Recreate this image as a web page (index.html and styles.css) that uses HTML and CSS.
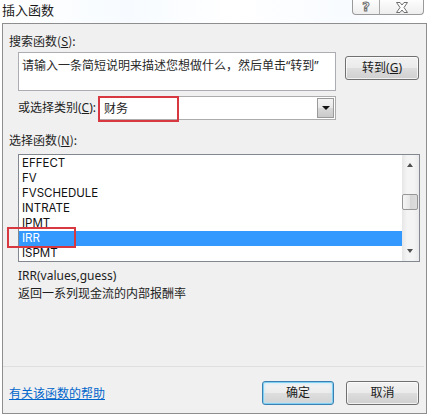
FILE: index.html
```html
<!DOCTYPE html>
<html lang="zh-CN">
<head>
<meta charset="utf-8">
<title>插入函数</title>
<link rel="stylesheet" href="styles.css">
</head>
<body>
<div class="window">
  <div class="titlebar">
    <span class="title">插入函数</span>
    <div class="caption-btns">
      <div class="cbtn help"><span class="qmark">?</span></div>
      <div class="cbtn close">
        <svg width="14" height="11" viewBox="0 0 14 11">
          <path d="M1.5 0.5 H5 L7 3 L9 0.5 H12.5 L9 5.5 L12.5 10.5 H9 L7 8 L5 10.5 H1.5 L5 5.5 Z" fill="#fdfdfd" stroke="#6f6f6f" stroke-width="1"/>
        </svg>
      </div>
    </div>
  </div>
  <div class="panel">
    <div class="label l1">搜索函数(<u>S</u>):</div>
    <div class="search-row">
      <div class="textbox">请输入一条简短说明来描述您想做什么，然后单击“转到”</div>
      <div class="btn go">转到(<u>G</u>)</div>
    </div>
    <div class="cat-row">
      <span class="cat-label">或选择类别(<u>C</u>):</span>
      <div class="select">
        <span class="sel-text">财务</span>
        <div class="dd-btn"><span class="dd-arrow"></span></div>
        <div class="mark sel-mark"></div>
      </div>
    </div>
    <div class="label l2">选择函数(<u>N</u>):</div>
    <div class="listbox">
      <ul class="items">
        <li>EFFECT</li>
        <li>FV</li>
        <li>FVSCHEDULE</li>
        <li>INTRATE</li>
        <li>IPMT</li>
        <li class="selected">IRR</li>
        <li>ISPMT</li>
      </ul>
      <div class="scrollbar">
        <span class="arrow up"></span>
        <div class="thumb"></div>
        <span class="arrow down"></span>
      </div>
      <div class="mark irr-mark"></div>
    </div>
    <div class="sig">IRR(values,guess)</div>
    <div class="desc">返回一系列现金流的内部报酬率</div>
    <div class="separator"></div>
    <div class="footer">
      <a class="help-link" href="#">有关该函数的帮助</a>
      <div class="footer-btns">
        <div class="btn ok">确定</div>
        <div class="btn cancel">取消</div>
      </div>
    </div>
  </div>
</div>
</body>
</html>
```

FILE: styles.css
```css
* { box-sizing: border-box; }

html, body {
  margin: 0;
  padding: 0;
  width: 429px;
  height: 417px;
  overflow: hidden;
  background: #ffffff;
}

body {
  font-family: "Noto Sans", "Noto Sans CJK SC", sans-serif;
  font-size: 12px;
  color: #1e1e1e;
}

.window {
  display: flex;
  flex-direction: column;
  height: 417px;
}

/* ---------- title bar ---------- */
.titlebar {
  height: 23px;
  display: flex;
  justify-content: space-between;
  align-items: flex-start;
  background: linear-gradient(90deg, #ffffff 0%, #f7fbff 30%, #ffffff 55%, #f8fbff 80%, #ffffff 100%);
}

.title {
  font-family: "Noto Sans CJK SC", sans-serif;
  font-size: 13px;
  line-height: 17px;
  padding: 1px 0 0 2px;
  color: #1a1a1a;
}

.caption-btns {
  display: flex;
  margin-right: 5px;
  height: 15px;
  border: 1px solid #9a9a9a;
  border-top: none;
  border-radius: 0 0 4px 4px;
  background: linear-gradient(#fdfdfd, #eeeeee);
  overflow: hidden;
}

.cbtn {
  display: flex;
  align-items: center;
  justify-content: center;
  height: 14px;
}

.help {
  width: 27px;
  border-right: 1px solid #a8a8a8;
}

.qmark {
  font-family: "DejaVu Sans", sans-serif;
  font-weight: bold;
  font-size: 13px;
  line-height: 14px;
  color: #fbfbfb;
  -webkit-text-stroke: 1px #6f6f6f;
  margin-top: -1px;
}

.close {
  width: 43px;
}

/* ---------- panel ---------- */
.panel {
  margin: 0 2px;
  height: 391px;
  border: 1px solid #8e8e8e;
  background: #f0f0f0;
  padding: 0 7px 8px 6px;
  display: flex;
  flex-direction: column;
}

.label {
  font-family: "Noto Sans CJK SC", sans-serif;
  line-height: 14px;
  height: 14px;
}

.l1 { margin-top: 10px; }
.l2 { margin-top: 13px; }

u { text-decoration: underline; text-underline-offset: 1px; }

.search-row {
  margin-top: 4px;
  margin-left: 9px;
  display: flex;
  align-items: flex-start;
  gap: 9px;
}

.textbox {
  width: 318px;
  height: 39px;
  background: #ffffff;
  border: 1px solid #abadb3;
  padding: 6px 0 0 3px;
  line-height: 14px;
  white-space: nowrap;
  overflow: hidden;
  color: #2a2a2a;
}

.btn {
  height: 24px;
  border: 1px solid #707070;
  border-radius: 3px;
  background: linear-gradient(#f2f2f2 0%, #ebebeb 48%, #dddddd 52%, #cfcfcf 100%);
  box-shadow: inset 0 0 0 1px rgba(255,255,255,0.7);
  display: flex;
  align-items: center;
  justify-content: center;
  font-family: "Noto Sans", "Noto Sans CJK SC", sans-serif;
  line-height: 14px;
  color: #1a1a1a;
}

.go {
  width: 74px;
  margin-top: 4px;
}

.cat-row {
  margin-top: 5px;
  margin-left: 9px;
  display: flex;
  align-items: center;
  height: 24px;
}

.cat-label {
  width: 80px;
  line-height: 24px;
  white-space: nowrap;
}

.select {
  position: relative;
  width: 238px;
  height: 24px;
  background: #ffffff;
  border: 1px solid #acacac;
  display: flex;
  align-items: center;
  justify-content: space-between;
  padding-left: 5px;
}

.sel-text {
  font-family: "Noto Sans CJK SC", sans-serif;
  line-height: 14px;
}

.dd-btn {
  width: 17px;
  height: 20px;
  margin-right: 1px;
  border: 1px solid #9a9a9a;
  background: linear-gradient(#f4f4f4 0%, #e8e8e8 50%, #d8d8d8 51%, #cacaca 100%);
  display: flex;
  align-items: center;
  justify-content: center;
}

.dd-arrow {
  width: 0;
  height: 0;
  border-left: 4px solid transparent;
  border-right: 4px solid transparent;
  border-top: 4px solid #111111;
}

.mark {
  position: absolute;
  border: 2px solid #d8383f;
  pointer-events: none;
}

.sel-mark {
  left: -1px;
  top: -1px;
  width: 81px;
  height: 26px;
}

/* ---------- list ---------- */
.listbox {
  position: relative;
  margin-top: 7px;
  margin-left: 9px;
  width: 402px;
  height: 108px;
  background: #ffffff;
  border: 1px solid #828790;
  display: flex;
}

.items {
  list-style: none;
  margin: 0;
  padding: 1px 0 0 0;
  width: 383px;
  overflow: hidden;
}

.items li {
  height: 15px;
  line-height: 15px;
  padding-left: 3px;
  font-family: Inter, "Noto Sans", sans-serif;
  font-size: 11.5px;
  color: #111111;
}

.items li.selected {
  background: #3399ff;
  color: #ffffff;
}

.scrollbar {
  position: relative;
  width: 17px;
  background: linear-gradient(90deg, #e6e6e6, #f4f4f4 30%, #f4f4f4 70%, #e9e9e9);
}

.arrow {
  position: absolute;
  left: 5px;
  width: 0;
  height: 0;
  border-left: 3.5px solid transparent;
  border-right: 3.5px solid transparent;
}

.arrow.up {
  top: 8px;
  border-bottom: 4px solid #505050;
}

.arrow.down {
  bottom: 8px;
  border-top: 4px solid #505050;
}

.thumb {
  position: absolute;
  left: 0;
  top: 39px;
  width: 16px;
  height: 16px;
  border: 1px solid #969696;
  border-radius: 2px;
  background: linear-gradient(90deg, #f5f5f5, #e6e6e6 50%, #d6d6d6 51%, #dcdcdc);
}

.irr-mark {
  left: -12px;
  top: 72px;
  width: 69px;
  height: 21px;
}

.sig {
  margin-top: 6px;
  margin-left: 9px;
  line-height: 15px;
  height: 15px;
}

.desc {
  margin-top: 3px;
  margin-left: 9px;
  line-height: 14px;
  font-family: "Noto Sans CJK SC", sans-serif;
}

.separator {
  margin-top: auto;
  margin-left: -6px;
  margin-right: -5px;
  height: 1px;
  background: #dfdfdf;
}

.footer {
  margin-top: 14px;
  height: 24px;
  display: flex;
  align-items: center;
  justify-content: space-between;
}

.help-link {
  font-family: "Noto Sans CJK SC", sans-serif;
  color: #0066cc;
  text-decoration: underline;
  line-height: 14px;
}

.footer-btns {
  display: flex;
  gap: 12px;
}

.ok {
  width: 72px;
  border-color: #3c7fb1;
  box-shadow: inset 0 0 0 1px #7fd0f3, inset 0 0 3px 1px #bde6f8;
  background: linear-gradient(#f4f4f4 0%, #ececec 48%, #dedede 52%, #d2d2d2 100%);
}

.cancel {
  width: 73px;
}
```
